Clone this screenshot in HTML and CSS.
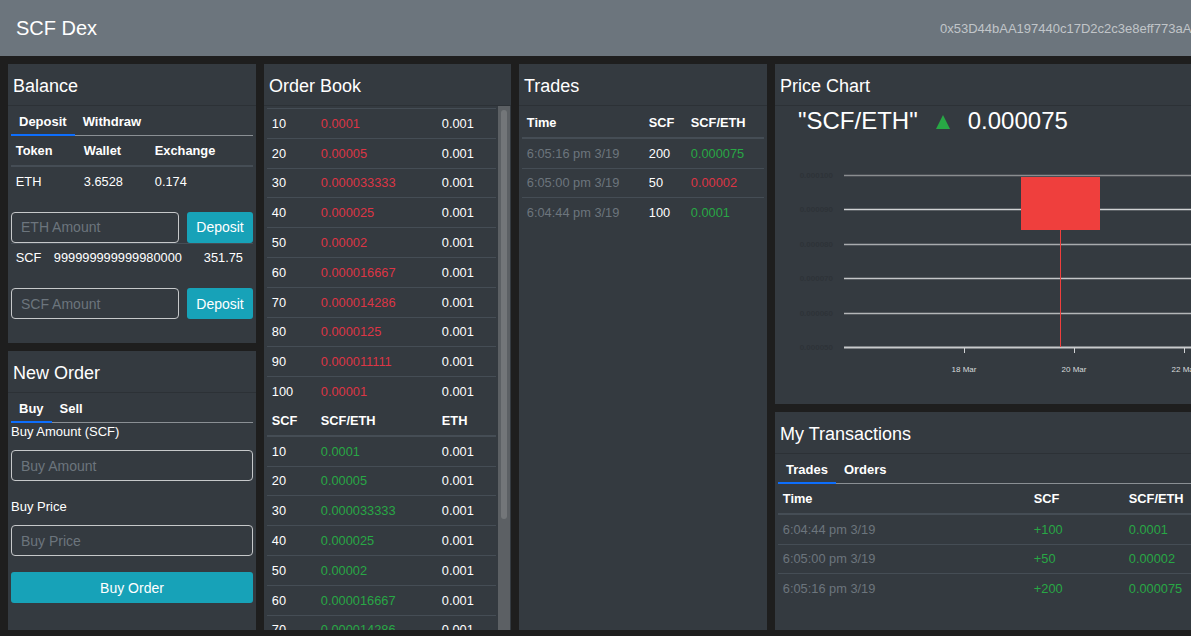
FILE: index.html
```html
<!DOCTYPE html>
<html lang="en">
<head>
<meta charset="utf-8">
<title>SCF Dex</title>
<link rel="stylesheet" href="styles.css">
</head>
<body>
<header class="navbar">
  <span class="brand">SCF Dex</span>
  <span class="account">0x53D44bAA197440c17D2c2c3e8eff773aA6b1E0c2</span>
</header>
<main class="grid">
  <div class="col">
    <section class="card fill">
      <div class="card-header">Balance</div>
      <div class="card-body">
        <nav class="tabs"><a class="tab active">Deposit</a><a class="tab">Withdraw</a></nav>
        <table class="tbl">
          <colgroup><col style="width:68px"><col style="width:71px"><col></colgroup>
          <thead><tr><th>Token</th><th>Wallet</th><th>Exchange</th></tr></thead>
          <tbody><tr><td>ETH</td><td>3.6528</td><td>0.174</td></tr></tbody>
        </table>
        <form class="inline-form"><input type="text" placeholder="ETH Amount"><button type="button" class="btn small">Deposit</button></form>
        <table class="tbl">
          <colgroup><col style="width:38px"><col style="width:150px"><col></colgroup>
          <tbody><tr><td>SCF</td><td>999999999999980000</td><td>351.75</td></tr></tbody>
        </table>
        <form class="inline-form"><input type="text" placeholder="SCF Amount"><button type="button" class="btn small">Deposit</button></form>
      </div>
    </section>
    <section class="card fill">
      <div class="card-header">New Order</div>
      <div class="card-body">
        <nav class="tabs"><a class="tab active">Buy</a><a class="tab">Sell</a></nav>
        <form class="order-form">
          <div class="group">
            <label>Buy Amount (SCF)</label>
            <input type="text" placeholder="Buy Amount">
          </div>
          <div class="group">
            <label>Buy Price</label>
            <input type="text" placeholder="Buy Price">
          </div>
          <button type="button" class="btn wide">Buy Order</button>
        </form>
      </div>
    </section>
  </div>

  <section class="card">
    <div class="card-header">Order Book</div>
    <div class="ob-body">
      <div class="ob-scroll">
        <table class="tbl">
          <colgroup><col style="width:49px"><col style="width:121px"><col></colgroup>
          <tbody>
            <tr><td>10</td><td class="red">0.0001</td><td>0.001</td></tr>
            <tr><td>20</td><td class="red">0.00005</td><td>0.001</td></tr>
            <tr><td>30</td><td class="red">0.000033333</td><td>0.001</td></tr>
            <tr><td>40</td><td class="red">0.000025</td><td>0.001</td></tr>
            <tr><td>50</td><td class="red">0.00002</td><td>0.001</td></tr>
            <tr><td>60</td><td class="red">0.000016667</td><td>0.001</td></tr>
            <tr><td>70</td><td class="red">0.000014286</td><td>0.001</td></tr>
            <tr><td>80</td><td class="red">0.0000125</td><td>0.001</td></tr>
            <tr><td>90</td><td class="red">0.000011111</td><td>0.001</td></tr>
            <tr><td>100</td><td class="red">0.00001</td><td>0.001</td></tr>
            <tr class="mid-head"><th>SCF</th><th>SCF/ETH</th><th>ETH</th></tr>
            <tr><td>10</td><td class="green">0.0001</td><td>0.001</td></tr>
            <tr><td>20</td><td class="green">0.00005</td><td>0.001</td></tr>
            <tr><td>30</td><td class="green">0.000033333</td><td>0.001</td></tr>
            <tr><td>40</td><td class="green">0.000025</td><td>0.001</td></tr>
            <tr><td>50</td><td class="green">0.00002</td><td>0.001</td></tr>
            <tr><td>60</td><td class="green">0.000016667</td><td>0.001</td></tr>
            <tr><td>70</td><td class="green">0.000014286</td><td>0.001</td></tr>
            <tr><td>80</td><td class="green">0.0000125</td><td>0.001</td></tr>
            <tr><td>90</td><td class="green">0.000011111</td><td>0.001</td></tr>
            <tr><td>100</td><td class="green">0.00001</td><td>0.001</td></tr>
          </tbody>
        </table>
      </div>
      <div class="scrollbar"><div class="thumb"></div></div>
    </div>
  </section>

  <section class="card">
    <div class="card-header">Trades</div>
    <div class="card-body">
      <table class="tbl">
        <colgroup><col style="width:122px"><col style="width:42px"><col></colgroup>
        <thead><tr><th>Time</th><th>SCF</th><th>SCF/ETH</th></tr></thead>
        <tbody>
          <tr><td class="muted">6:05:16 pm 3/19</td><td>200</td><td class="green">0.000075</td></tr>
          <tr><td class="muted">6:05:00 pm 3/19</td><td>50</td><td class="red">0.00002</td></tr>
          <tr><td class="muted">6:04:44 pm 3/19</td><td>100</td><td class="green">0.0001</td></tr>
        </tbody>
      </table>
    </div>
  </section>

  <div class="col">
    <section class="card chart-card">
      <div class="card-header">Price Chart</div>
      <div class="chart-body">
        <div class="pair">
          <span>"SCF/ETH"</span>
          <svg class="arrow" width="14" height="14" viewBox="0 0 14 14"><polygon points="7,0 14,14 0,14" fill="#28a745"/></svg>
          <span>0.000075</span>
        </div>
        <svg class="chart" width="500" height="268" viewBox="0 0 500 268">
          <g class="ylab">
            <text x="58" y="42">0.000100</text>
            <text x="58" y="76">0.000090</text>
            <text x="58" y="111">0.000080</text>
            <text x="58" y="145">0.000070</text>
            <text x="58" y="180">0.000060</text>
            <text x="58" y="214">0.000050</text>
          </g>
          <g stroke-width="1.5">
            <line x1="69" y1="39.5" x2="500" y2="39.5" stroke="#8a8d90"/>
            <line x1="69" y1="73.5" x2="500" y2="73.5" stroke="#d0d2d4"/>
            <line x1="69" y1="108.5" x2="500" y2="108.5" stroke="#a8abae"/>
            <line x1="69" y1="142.5" x2="500" y2="142.5" stroke="#c4c6c8"/>
            <line x1="69" y1="177.5" x2="500" y2="177.5" stroke="#b4b6b8"/>
            <line x1="69" y1="211.5" x2="500" y2="211.5" stroke="#c8cacc" stroke-width="2"/>
          </g>
          <rect x="246" y="41" width="79" height="53" fill="#ef3f3d"/>
          <line x1="285.5" y1="94" x2="285.5" y2="211" stroke="#ef3f3d"/>
          <g stroke="#d0d2d4">
            <line x1="189.5" y1="212" x2="189.5" y2="217"/>
            <line x1="299.5" y1="212" x2="299.5" y2="217"/>
            <line x1="409.5" y1="212" x2="409.5" y2="217"/>
          </g>
          <g class="xlab">
            <text x="189" y="236">18 Mar</text>
            <text x="299" y="236">20 Mar</text>
            <text x="409" y="236">22 Mar</text>
          </g>
        </svg>
      </div>
    </section>
    <section class="card fill">
      <div class="card-header">My Transactions</div>
      <div class="card-body">
        <nav class="tabs"><a class="tab active">Trades</a><a class="tab">Orders</a></nav>
        <table class="tbl">
          <colgroup><col style="width:251px"><col style="width:95px"><col></colgroup>
          <thead><tr><th>Time</th><th>SCF</th><th>SCF/ETH</th></tr></thead>
          <tbody>
            <tr><td class="muted">6:04:44 pm 3/19</td><td class="green">+100</td><td class="green">0.0001</td></tr>
            <tr><td class="muted">6:05:00 pm 3/19</td><td class="green">+50</td><td class="green">0.00002</td></tr>
            <tr><td class="muted">6:05:16 pm 3/19</td><td class="green">+200</td><td class="green">0.000075</td></tr>
          </tbody>
        </table>
      </div>
    </section>
  </div>
</main>
</body>
</html>
```
FILE: styles.css
```css
* { box-sizing: border-box; }
html, body { margin: 0; }
body {
  background: #1e1e1e;
  color: #fff;
  font-family: "Liberation Sans", Arial, sans-serif;
  width: 1191px;
  height: 636px;
  overflow: hidden;
}
.navbar {
  height: 56px;
  background: #6c757d;
  display: flex;
  align-items: center;
  padding: 0 16px;
  white-space: nowrap;
  width: 1191px;
  overflow: hidden;
}
.brand { flex: none; width: 924px; font-size: 20px; color: #fff; }
.account { flex: none; font-size: 13px; color: #c1c5c9; }

.grid {
  display: grid;
  grid-template-columns: 248px 247px 248px 500px;
  gap: 8px;
  padding: 8px;
  height: 582px;
  width: 1300px;
}
.col { display: flex; flex-direction: column; gap: 8px; min-height: 0; }
.card {
  background: #343a40;
  display: flex;
  flex-direction: column;
  min-height: 0;
  overflow: hidden;
}
.fill { flex: 1; }
.chart-card { flex: none; height: 340px; }
.card-header {
  flex: none;
  height: 42px;
  border-bottom: 1px solid #2c3136;
  padding: 3px 5px 0;
  display: flex;
  align-items: center;
  font-size: 18px;
}
.card-body { flex: 1; min-height: 0; padding: 2px 3px 0; }

.ob-body { flex: 1; min-height: 0; display: flex; }
.ob-scroll { flex: 1; min-width: 0; overflow: hidden; padding: 2px 2px 0 3px; }
.scrollbar {
  flex: none;
  width: 12px;
  margin-right: 1px;
  background: #5c6064;
  padding: 4px 3px 0;
}
.thumb { height: 409px; background: #737679; border-radius: 3px; }

.tabs { display: flex; border-bottom: 1px solid #8a8f94; }
.tab {
  padding: 6px 8px 5px;
  font-size: 13px;
  line-height: 15px;
  font-weight: bold;
  color: #fff;
  border-bottom: 2px solid transparent;
  margin-bottom: -1px;
}
.tab.active { border-bottom-color: #0d6efd; }

.tbl {
  width: 100%;
  border-collapse: collapse;
  table-layout: fixed;
  font-size: 12.8px;
  line-height: 19.2px;
}
.tbl th, .tbl td {
  padding: 4.8px;
  text-align: left;
  white-space: nowrap;
  overflow: hidden;
}
.tbl td { border-top: 1px solid #454d55; }
.tbl thead th, .tbl .mid-head th { border-bottom: 2px solid #454d55; font-weight: bold; }
.red { color: #dc3545; }
.green { color: #28a745; }
.muted { color: #6c757d; }

.inline-form { display: flex; gap: 8px; margin-top: 16px; }
input {
  flex: 1;
  min-width: 0;
  width: 100%;
  height: 31px;
  border: 1px solid #c6c8ca;
  border-radius: 4px;
  background: transparent;
  color: #fff;
  font: 14px "Liberation Sans", Arial, sans-serif;
  padding: 0 9px;
  display: block;
}
input::placeholder { color: #6c757d; }
.btn {
  background: #17a2b8;
  color: #fff;
  border: none;
  border-radius: 3px;
  font: 14px "Liberation Sans", Arial, sans-serif;
  height: 31px;
}
.btn.small { flex: none; width: 66px; padding: 0; }
.btn.wide { display: block; width: 100%; margin-top: 16px; }

.order-form .group + .group { margin-top: 17px; }
.order-form label {
  display: block;
  font-size: 13px;
  line-height: 18px;
  margin-bottom: 9px;
}

.chart-body { flex: 1; display: flex; flex-direction: column; }
.pair {
  height: 30px;
  display: flex;
  align-items: center;
  padding-left: 23px;
  font-size: 24px;
  gap: 18px;
  white-space: nowrap;
}
.arrow { flex: none; margin-top: 1px; }
.chart { display: block; flex: none; }
.ylab text { font-size: 8px; font-weight: bold; fill: #2e3338; text-anchor: end; }
.xlab text { font-size: 8px; fill: #d8dadc; text-anchor: middle; }
```
